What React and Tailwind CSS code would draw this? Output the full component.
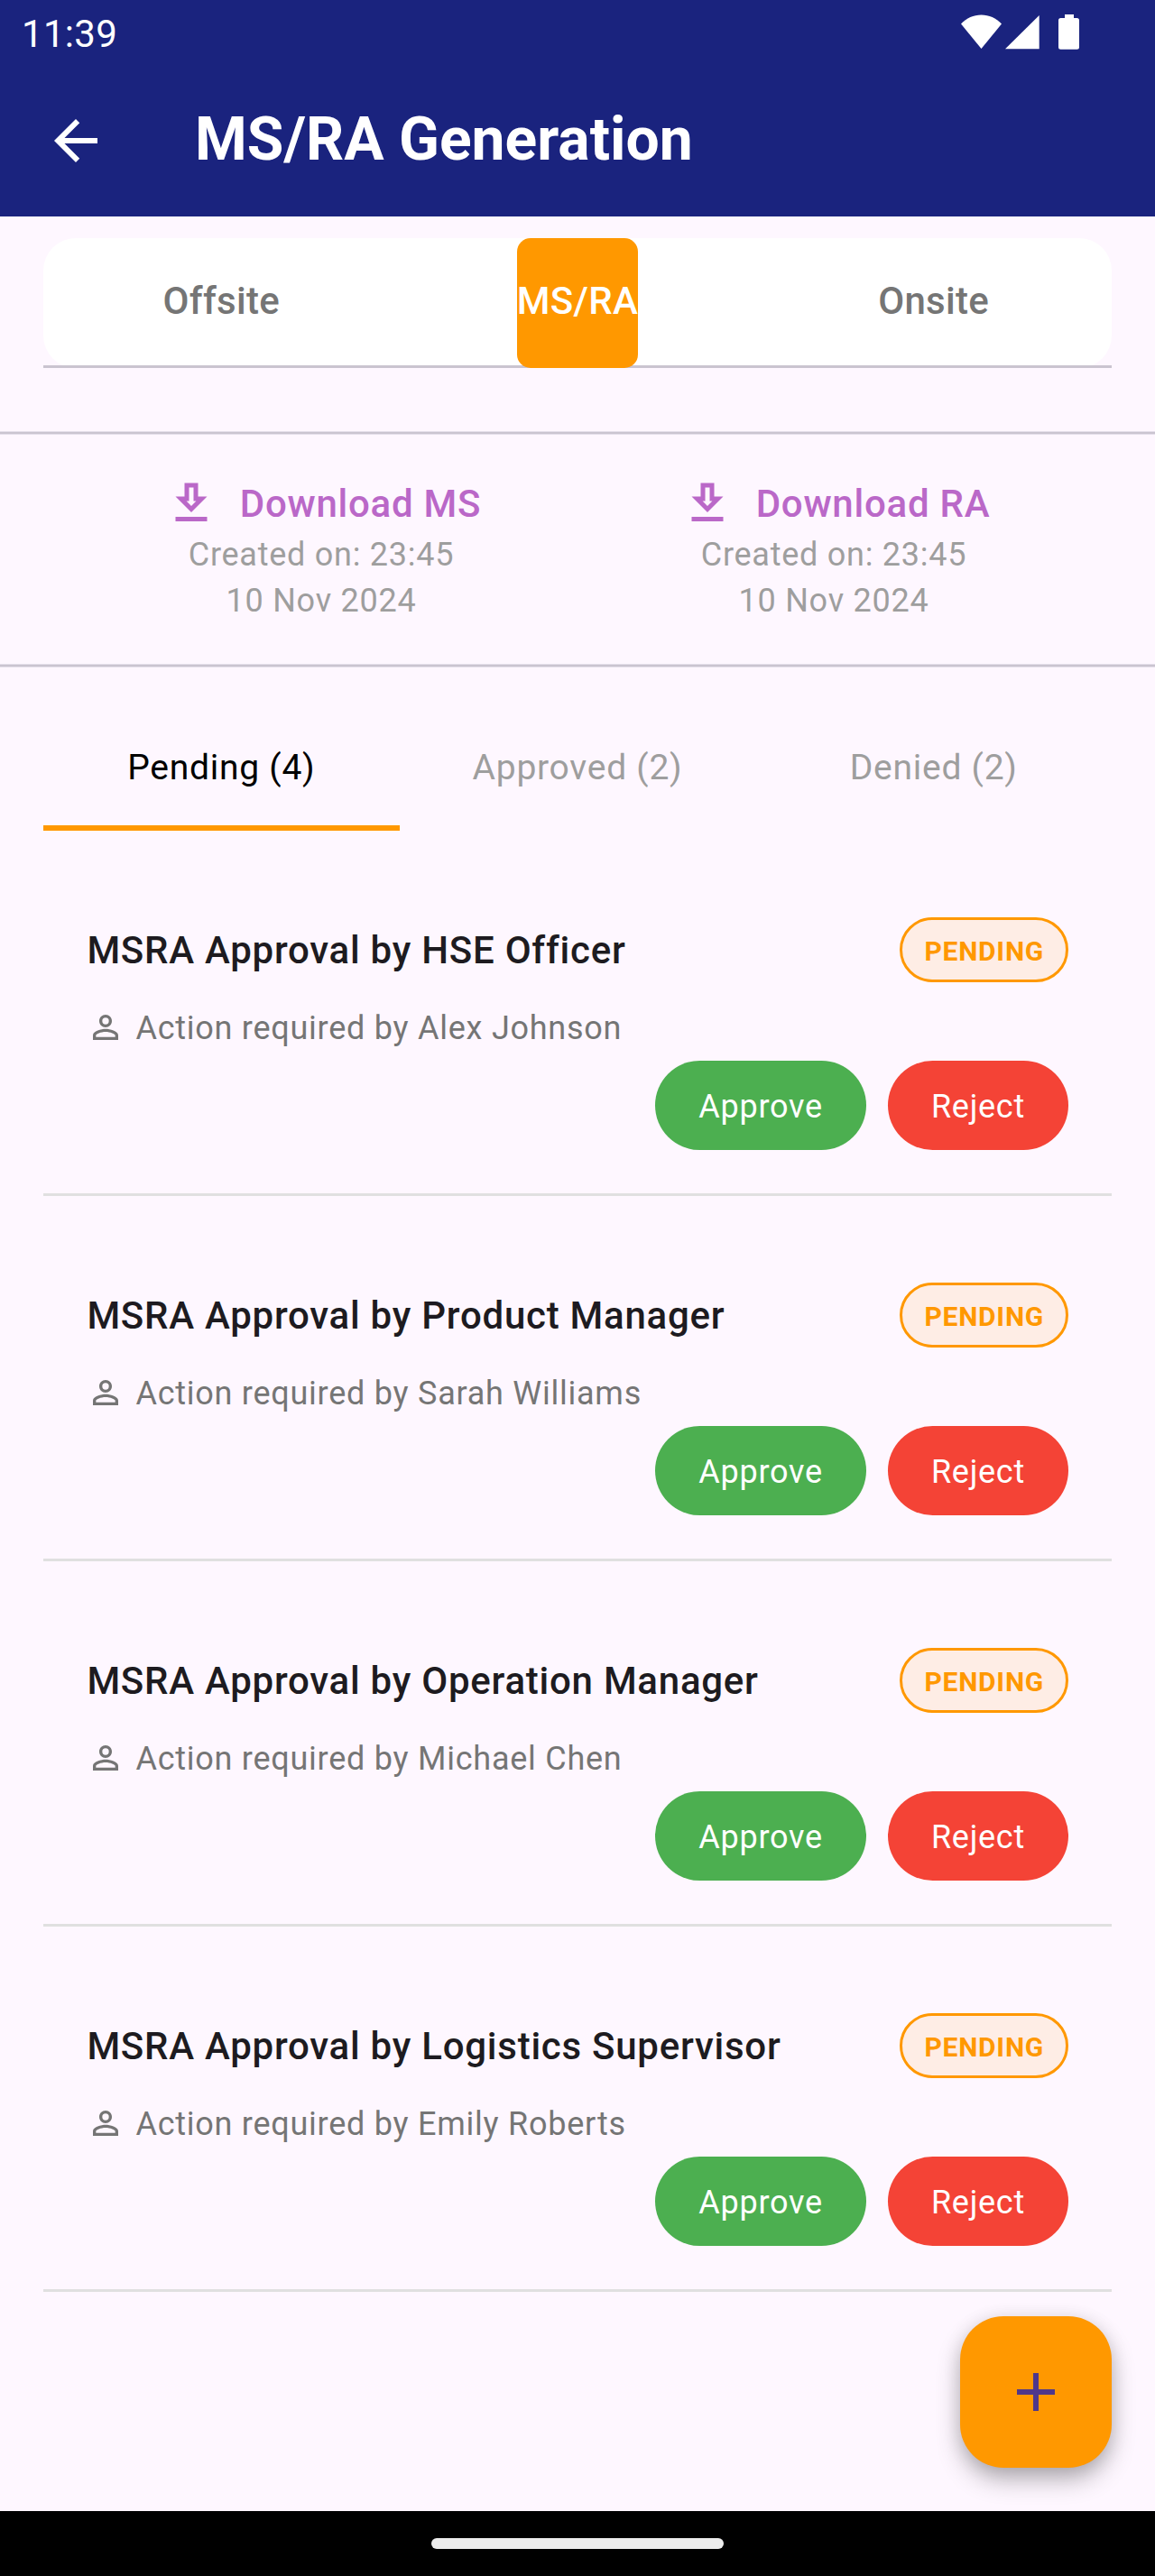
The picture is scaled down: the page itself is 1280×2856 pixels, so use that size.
import React from "react";

const approvals = [
  { role: "HSE Officer", person: "Alex Johnson" },
  { role: "Product Manager", person: "Sarah Williams" },
  { role: "Operation Manager", person: "Michael Chen" },
  { role: "Logistics Supervisor", person: "Emily Roberts" },
];

function StatusBar() {
  return (
    <div className="flex h-[72px] items-start justify-between pl-[24px] pr-[84px] text-white">
      <span className="mt-[8px] text-[42px] leading-[60px] tracking-[0.3px]">11:39</span>
      <svg className="mt-[16px] h-[39px] w-[131px]" viewBox="0 0 131 39" fill="currentColor">
        <path d="M22.5 38 0 10.5C6 4 14 .5 22.5 .5S39 4 45 10.5Z" />
        <path d="M86.700 1v37.300H49Z" />
        <path d="M115 0h10v4h3.500a2.500 2.500 0 0 1 2.500 2.500v29.700a2.500 2.500 0 0 1-2.500 2.500h-18a2.500 2.500 0 0 1-2.500-2.500V6.500a2.500 2.500 0 0 1 2.500-2.500h4.500Z" />
      </svg>
    </div>
  );
}

function AppBar() {
  return (
    <header className="h-[240px] bg-[#1a237e] text-white">
      <StatusBar />
      <div className="flex h-[168px] items-center pl-[48px]">
        <svg className="size-[72px]" viewBox="0 0 24 24" fill="currentColor">
          <path d="M20 11H7.830l5.590-5.590L12 4l-8 8 8 8 1.410-1.410L7.830 13H20v-2z" />
        </svg>
        <h1 className="ml-[96px] pb-[2px] text-[66px] font-bold leading-[84px]">MS/RA Generation</h1>
      </div>
    </header>
  );
}

function PhaseTabs() {
  return (
    <nav className="mx-[48px] mt-[24px] h-[144px]">
      <div className="h-[144px] rounded-[36px] bg-white">
        <div className="grid h-[144px] grid-cols-3 border-b-[3px] border-[#cac4d0] text-[42px] font-medium leading-[60px] tracking-[0.3px] text-[#757575]">
          <span className="flex items-center justify-center pb-[1px]">Offsite</span>
          <span className="-mb-[3px] flex items-center justify-center justify-self-center rounded-[15px] bg-[#ff9800] pb-[4px] text-white">
            MS/RA
          </span>
          <span className="flex items-center justify-center pb-[1px]">Onsite</span>
        </div>
      </div>
    </nav>
  );
}

function Rule() {
  return <div className="h-[4px] border-y border-[#e4deea] bg-[#cac4d0]" />;
}

function Download({ label }) {
  return (
    <div className="flex flex-col items-center pt-[46px]">
      <div className="flex h-[60px] items-center gap-[24px] pl-[3px] text-[#ba68c8]">
        <svg className="size-[60px]" viewBox="0 0 24 24" fill="currentColor">
          <path d="M19 9h-4V3H9v6H5l7 7 7-7zm-8 2V5h2v6h1.170L12 13.170 9.830 11H11zm-6 7h14v2H5v-2z" />
        </svg>
        <span className="pt-[2px] text-[42px] font-medium leading-[60px] tracking-[0.75px]">{label}</span>
      </div>
      <p className="mt-[2px] text-center text-[36px] leading-[51px] tracking-[0.75px] text-[#9e9e9e]">
        Created on: 23:45
        <br />
        10 Nov 2024
      </p>
    </div>
  );
}

function StatusTabs() {
  return (
    <nav className="mx-[48px] mt-[37px] grid h-[144px] grid-cols-3 text-[39px] leading-[56px] tracking-[0.75px] text-[#9e9e9e]">
      <span className="flex items-center justify-center border-b-[6px] border-[#ff9800] pb-[2px] pt-[12px] text-black">
        Pending (4)
      </span>
      <span className="flex items-center justify-center border-b-[6px] border-transparent pb-[2px] pt-[12px]">
        Approved (2)
      </span>
      <span className="flex items-center justify-center border-b-[6px] border-transparent pb-[2px] pt-[12px]">
        Denied (2)
      </span>
    </nav>
  );
}

function ApprovalCard({ role, person }) {
  return (
    <li className="mx-[48px] h-[405px] border-b-[3px] border-[#e0e0e0] px-[48px] pt-[96px]">
      <div className="flex h-[72px] items-center justify-between">
        <h2 className="pl-[0.4px] pt-[2px] text-[42px] font-medium leading-[60px] tracking-[0.75px] text-[#1d1b20]">
          MSRA Approval by {role}
        </h2>
        <span className="flex h-[72px] items-center rounded-full border-[3px] border-[#ff9800] bg-[#feede5] px-[24px] pt-[3px] text-[30px] font-bold leading-[43px] tracking-[0.75px] text-[#ff9800]">
          PENDING
        </span>
      </div>
      <div className="mt-[24px] flex h-[52px] items-center gap-[12px] text-[#757575]">
        <svg className="size-[42px]" viewBox="0 0 24 24" fill="currentColor">
          <path d="M12 5.900a2.100 2.100 0 1 1 0 4.200 2.100 2.100 0 0 1 0-4.200m0 9c2.970 0 6.100 1.460 6.100 2.100v1.100H5.900V17c0-.64 3.130-2.100 6.100-2.100M12 4C9.790 4 8 5.790 8 8s1.790 4 4 4 4-1.790 4-4-1.790-4-4-4zm0 9c-2.670 0-8 1.340-8 4v3h16v-3c0-2.660-5.330-4-8-4z" />
        </svg>
        <span className="pl-[0.4px] pt-[2px] text-[36px] leading-[52px] tracking-[0.75px]">
          Action required by {person}
        </span>
      </div>
      <div className="mt-[11px] flex justify-end gap-[24px] text-[36px] leading-[52px] tracking-[0.75px] text-white">
        <button className="h-[99px] rounded-full bg-[#4caf50] px-[48px] pt-[3px]">Approve</button>
        <button className="h-[99px] rounded-full bg-[#f44336] px-[48px] pt-[3px]">Reject</button>
      </div>
    </li>
  );
}

export default function App() {
  return (
    <div className="relative flex h-[2856px] w-[1280px] flex-col overflow-hidden bg-[#fef7ff] font-[Roboto,sans-serif]">
      <AppBar />
      <PhaseTabs />
      <div className="mt-[70px]">
        <Rule />
        <section className="grid h-[254px] grid-cols-2 px-[72px]">
          <Download label="Download MS" />
          <Download label="Download RA" />
        </section>
        <Rule />
      </div>
      <StatusTabs />
      <ul className="flex-1">
        {approvals.map((item) => (
          <ApprovalCard key={item.role} {...item} />
        ))}
      </ul>
      <button
        aria-label="Add"
        className="absolute bottom-[120px] right-[48px] flex size-[168px] items-center justify-center rounded-[48px] bg-[#ff9800] text-[#4f378b] shadow-[0_14px_28px_-2px_rgba(0,0,0,0.3),0_2px_20px_0_rgba(0,0,0,0.1)]"
      >
        <svg className="size-[72px]" viewBox="0 0 24 24" fill="currentColor">
          <path d="M19 13h-6v6h-2v-6H5v-2h6V5h2v6h6v2z" />
        </svg>
      </button>
      <footer className="z-10 flex h-[72px] items-start justify-center bg-black pt-[30px]">
        <div className="h-[12px] w-[324px] rounded-full bg-[#ececec]" />
      </footer>
    </div>
  );
}
